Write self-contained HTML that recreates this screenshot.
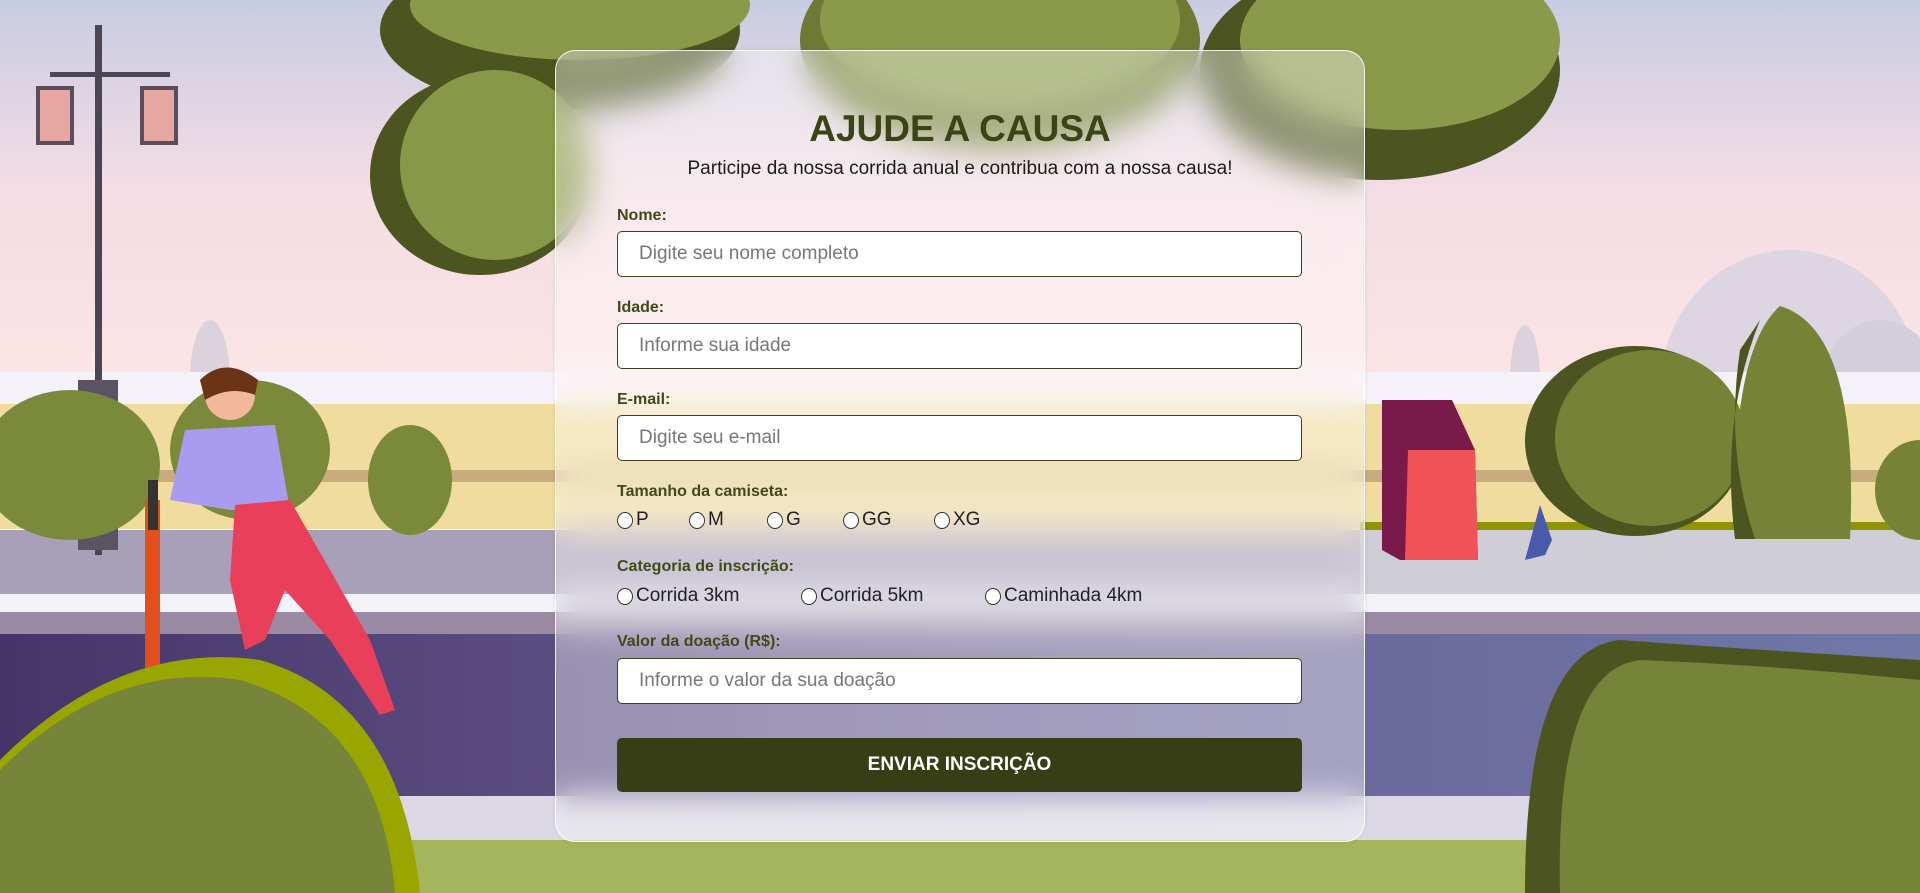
<!DOCTYPE html>
<html><head><meta charset="utf-8"><style>
*{box-sizing:border-box;margin:0;padding:0}
body{width:1920px;height:893px;overflow:hidden;position:relative;font-family:"Liberation Sans",sans-serif;}
svg.bg{position:absolute;left:0;top:0}
.card{position:absolute;left:555px;top:50px;width:810px;height:792px;border-radius:20px;background:rgba(255,255,255,0.38);backdrop-filter:blur(16px);-webkit-backdrop-filter:blur(16px);border:1px solid rgba(255,255,255,0.85);box-shadow:0 0 6px rgba(0,0,0,0.08)}
.a{position:absolute}
h1{position:absolute;left:0;width:100%;top:108px;text-align:center;font-size:37px;font-weight:bold;color:#3a4414}
.sub{left:0;width:100%;top:158px;text-align:center;font-size:19px;color:#1c1c1c}
.lbl{left:617px;font-size:16px;font-weight:bold;color:#3f4a18}
.inp{left:617px;width:685px;height:46px;background:#fff;border:1px solid #3a3f1c;border-radius:5px;padding-left:21px;font-size:19px;color:#777;line-height:44px}
.radio{font-size:19px;color:#222;display:flex;align-items:center}
.radio i{display:inline-block;width:16px;height:17px;border-radius:50%;border:1px solid #333;background:#fff;margin-right:3px}
.btn{left:617px;top:738px;width:685px;height:54px;background:#373d15;border-radius:5px;color:#fff;font-weight:bold;font-size:19px;text-align:center;line-height:54px}
</style></head><body>
<svg class="bg" width="1920" height="893" viewBox="0 0 1920 893">
<defs>
<linearGradient id="sky" x1="0" y1="0" x2="0" y2="1"><stop offset="0" stop-color="#c8cce2"/><stop offset="0.45" stop-color="#f4dde4"/><stop offset="1" stop-color="#fde6e6"/></linearGradient>
<linearGradient id="road" x1="0" y1="0" x2="1" y2="0"><stop offset="0" stop-color="#463567"/><stop offset="0.5" stop-color="#6a5f95"/><stop offset="1" stop-color="#7078a8"/></linearGradient>
</defs>
<rect width="1920" height="420" fill="url(#sky)"/>
<ellipse cx="1790" cy="390" rx="130" ry="140" fill="#ddd6e2"/>
<ellipse cx="1880" cy="390" rx="60" ry="70" fill="#d2cedc"/>
<ellipse cx="210" cy="380" rx="20" ry="60" fill="#dcd2dc"/>
<ellipse cx="1525" cy="380" rx="15" ry="55" fill="#dcd2dc"/>
<rect y="372" width="1920" height="40" fill="#f5f1f8"/>
<rect y="404" width="1920" height="125" fill="#f1dc9f"/>
<rect y="470" width="1920" height="12" fill="#c9ab80"/>
<rect x="1360" y="522" width="560" height="10" fill="#8f9404"/>
<rect y="530" width="1920" height="82" fill="#a89fb8"/>
<rect x="1360" y="530" width="560" height="70" fill="#cfcdd5"/>
<rect y="594" width="1920" height="20" fill="#f2f3f8"/>
<rect y="612" width="1920" height="190" fill="url(#road)"/>
<rect y="612" width="1920" height="22" fill="#9a8aa3"/>
<rect y="796" width="1920" height="50" fill="#dcd8e6"/>
<rect y="840" width="1920" height="53" fill="#a5b55c"/>
<ellipse cx="560" cy="30" rx="180" ry="80" fill="#4c5420"/>
<ellipse cx="580" cy="5" rx="170" ry="55" fill="#8b9a4a"/>
<ellipse cx="480" cy="175" rx="110" ry="100" fill="#4c5420"/>
<ellipse cx="495" cy="165" rx="95" ry="95" fill="#879848"/>
<ellipse cx="1000" cy="40" rx="200" ry="110" fill="#6e7a34"/>
<ellipse cx="1000" cy="20" rx="180" ry="90" fill="#8a9a48"/>
<ellipse cx="1380" cy="70" rx="180" ry="110" fill="#4c5420"/>
<ellipse cx="1400" cy="40" rx="160" ry="90" fill="#8b9a4a"/>
<rect x="95" y="25" width="7" height="530" fill="#4c4553"/>
<rect x="78" y="380" width="40" height="170" fill="#5a5462"/>
<rect x="85" y="470" width="18" height="60" fill="#9c5040"/>
<rect x="50" y="72" width="120" height="5" fill="#4c4553"/>
<rect x="38" y="88" width="34" height="55" fill="#e7a8a4" stroke="#5a4e5e" stroke-width="4"/>
<rect x="142" y="88" width="34" height="55" fill="#e7a8a4" stroke="#5a4e5e" stroke-width="4"/>
<ellipse cx="70" cy="465" rx="90" ry="75" fill="#7a8a3a"/>
<ellipse cx="250" cy="450" rx="80" ry="70" fill="#7a8a3a"/>
<ellipse cx="410" cy="480" rx="42" ry="55" fill="#7a8a3a"/>
<circle cx="230" cy="395" r="25" fill="#f3b89b"/>
<path d="M200 380 Q225 355 258 380 L255 395 Q230 385 205 400Z" fill="#6b3416"/>
<path d="M185 430 L275 425 L290 510 L230 510 L170 500Z" fill="#a99bf0"/>
<path d="M235 505 L290 500 L370 640 L395 710 L380 715 L330 640 L285 590 L265 640 L245 650 L230 580Z" fill="#ea3f5a"/>
<rect x="145" y="500" width="15" height="170" fill="#e24f1c"/>
<rect x="148" y="480" width="10" height="50" fill="#333"/>
<ellipse cx="1635" cy="441" rx="110" ry="95" fill="#4c5420"/>
<ellipse cx="1650" cy="438" rx="95" ry="88" fill="#768337"/>
<path d="M1780 306 Q1860 330 1850 539 L1735 539 Q1730 350 1780 306Z" fill="#768337"/>
<path d="M1740 350 Q1725 450 1755 539 L1735 539 Q1720 420 1760 320Z" fill="#4c5420"/>
<ellipse cx="1920" cy="490" rx="45" ry="50" fill="#768337"/>
<path d="M1382 400 L1452 400 L1475 450 L1478 560 L1400 560 L1382 550Z" fill="#7a1a4a"/>
<path d="M1408 450 L1475 450 L1478 560 L1405 560Z" fill="#ef5358"/>
<path d="M1525 560 L1540 505 L1552 540 L1545 555Z" fill="#4a5aaa"/>
<path d="M0 893 L0 760 Q120 640 260 660 Q400 700 420 893Z" fill="#9aa600"/>
<path d="M0 893 L0 770 Q110 660 240 680 Q380 720 395 893Z" fill="#76853a"/>
<path d="M1525 893 Q1525 650 1620 640 Q1760 650 1920 660 L1920 893Z" fill="#4c5420"/>
<path d="M1560 893 Q1555 670 1640 660 Q1770 665 1920 680 L1920 893Z" fill="#76843a"/>
</svg>
<div class="card"></div>
<h1>AJUDE A CAUSA</h1>
<div class="a sub">Participe da nossa corrida anual e contribua com a nossa causa!</div>
<div class="a lbl" style="top:207px">Nome:</div>
<div class="a inp" style="top:231px">Digite seu nome completo</div>
<div class="a lbl" style="top:299px">Idade:</div>
<div class="a inp" style="top:323px">Informe sua idade</div>
<div class="a lbl" style="top:391px">E-mail:</div>
<div class="a inp" style="top:415px">Digite seu e-mail</div>
<div class="a lbl" style="top:483px">Tamanho da camiseta:</div>
<div class="a radio" style="left:617px;top:509px"><i></i>P</div>
<div class="a radio" style="left:689px;top:509px"><i></i>M</div>
<div class="a radio" style="left:767px;top:509px"><i></i>G</div>
<div class="a radio" style="left:843px;top:509px"><i></i>GG</div>
<div class="a radio" style="left:934px;top:509px"><i></i>XG</div>
<div class="a lbl" style="top:558px">Categoria de inscrição:</div>
<div class="a radio" style="left:617px;top:585px"><i></i>Corrida 3km</div>
<div class="a radio" style="left:801px;top:585px"><i></i>Corrida 5km</div>
<div class="a radio" style="left:985px;top:585px"><i></i>Caminhada 4km</div>
<div class="a lbl" style="top:633px">Valor da doação (R$):</div>
<div class="a inp" style="top:658px">Informe o valor da sua doação</div>
<div class="a btn">ENVIAR INSCRIÇÃO</div>
</body></html>
